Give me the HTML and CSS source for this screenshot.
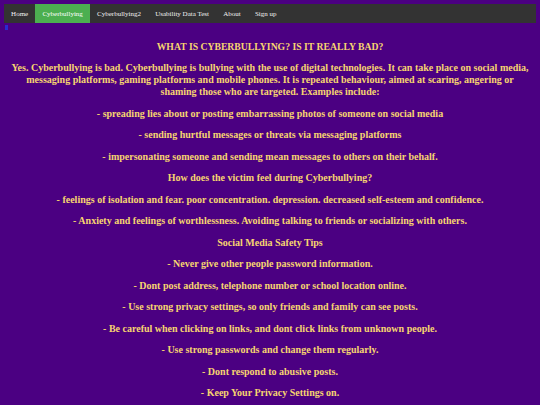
FILE: index.html
```html
<!DOCTYPE html>
<html lang="en">
<head>
<meta charset="utf-8">
<title>Cyberbullying</title>
<link rel="stylesheet" href="styles.css">
</head>
<body>
<nav class="topnav">
  <a href="#" class="nav-link">Home</a>
  <a href="#" class="nav-link active">Cyberbullying</a>
  <a href="#" class="nav-link">Cyberbullying2</a>
  <a href="#" class="nav-link">Usability Data Test</a>
  <a href="#" class="nav-link">About</a>
  <a href="#" class="nav-link">Sign up</a>
</nav>
<div class="marker-row"><span class="marker"></span></div>
<main class="content">
  <p class="title">WHAT IS CYBERBULLYING? IS IT REALLY BAD?</p>
  <p>Yes. Cyberbullying is bad. Cyberbullying is bullying with the use of digital technologies. It can take place on social media, messaging platforms, gaming platforms and mobile phones. It is repeated behaviour, aimed at scaring, angering or shaming those who are targeted. Examples include:</p>
  <p>- spreading lies about or posting embarrassing photos of someone on social media</p>
  <p>- sending hurtful messages or threats via messaging platforms</p>
  <p>- impersonating someone and sending mean messages to others on their behalf.</p>
  <p>How does the victim feel during Cyberbullying?</p>
  <p>- feelings of isolation and fear. poor concentration. depression. decreased self-esteem and confidence.</p>
  <p>- Anxiety and feelings of worthlessness. Avoiding talking to friends or socializing with others.</p>
  <p>Social Media Safety Tips</p>
  <p>- Never give other people password information.</p>
  <p>- Dont post address, telephone number or school location online.</p>
  <p>- Use strong privacy settings, so only friends and family can see posts.</p>
  <p>- Be careful when clicking on links, and dont click links from unknown people.</p>
  <p>- Use strong passwords and change them regularly.</p>
  <p>- Dont respond to abusive posts.</p>
  <p>- Keep Your Privacy Settings on.</p>
</main>
</body>
</html>
```

FILE: styles.css
```css
html, body {
  background: #4b0082;
}
body {
  margin: 4px 4px;
  font-family: "Liberation Serif", "Times New Roman", serif;
}
.topnav {
  display: flex;
  background: #333333;
  height: 19px;
}
.nav-link {
  display: flex;
  align-items: center;
  padding: 0 7.1px;
  color: #f2f2f2;
  text-decoration: none;
  font-size: 7px;
}
.nav-link.active {
  background: #4caf50;
  color: #ffffff;
}
.marker-row {
  height: 8px;
  padding-left: 1px;
  padding-top: 2px;
  box-sizing: border-box;
}
.marker {
  display: block;
  width: 3px;
  height: 5px;
  background: #2a2ad0;
}
.content {
  padding: 0 6px;
  text-align: center;
  color: #f7d570;
  font-weight: bold;
  font-size: 10px;
  line-height: 12px;
}
.content p {
  margin: 9.5px 0;
}
.content .title {
  font-size: 9.7px;
}
```
